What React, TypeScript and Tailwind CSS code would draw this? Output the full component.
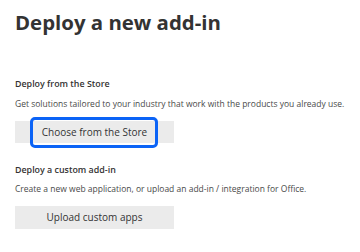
export default function App() {
  return (
    <div
      className="w-[360px] h-[252px] bg-white px-[15px] text-[#323130]"
      style={{ fontFamily: '"Open Sans", "Noto Sans", sans-serif' }}
    >
      {/* Title */}
      <h1 className="pt-[8px] text-[20.4px] leading-[28px] font-bold text-[#333]">
        Deploy a new add-in
      </h1>

      {/* Store section */}
      <h2 className="mt-[42px] text-[8.9px] leading-[12px] font-semibold text-[#333]">
        Deploy from the Store
      </h2>
      <p className="mt-[8px] text-[8.5px] leading-[12px] text-[#4a4a4a]">
        Get solutions tailored to your industry that work with the products you already use.
      </p>
      <button className="relative mt-[11px] flex h-[22px] w-[159px] items-center justify-center bg-[#ebebeb] text-[10px] font-medium text-[#333]">
        Choose from the Store
        <span className="absolute left-[15px] right-[16px] top-[-4px] bottom-[-5px] rounded-[5px] border-[3px] border-[#0b63f6]" />
      </button>

      {/* Custom section */}
      <h2 className="mt-[21px] text-[8.9px] leading-[12px] font-semibold text-[#333]">
        Deploy a custom add-in
      </h2>
      <p className="mt-[7px] text-[8.5px] leading-[12px] text-[#4a4a4a]">
        Create a new web application, or upload an add-in / integration for Office.
      </p>
      <button className="mt-[11px] flex h-[23px] w-[159px] items-center justify-center bg-[#ebebeb] text-[10px] font-medium text-[#333]">
        Upload custom apps
      </button>
    </div>
  );
}
